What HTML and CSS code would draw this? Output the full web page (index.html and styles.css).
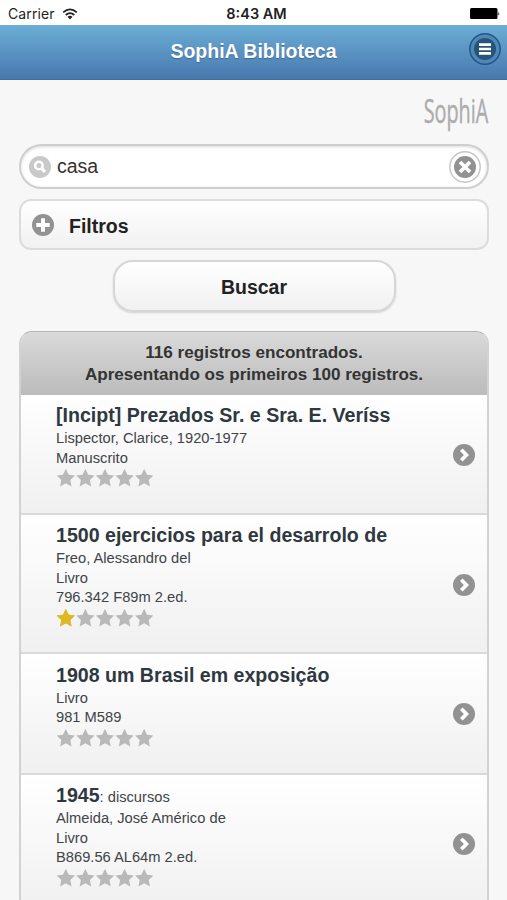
FILE: index.html
```
<!DOCTYPE html>
<html lang="pt-BR">
<head>
    <meta charset="UTF-8">
    <meta name="viewport" content="width=device-width, initial-scale=1.0">
    <title>SophiA Biblioteca</title>
    <link rel="stylesheet" href="styles.css">
</head>
<body>
    <svg class="defs" width="0" height="0">
        <symbol id="arrow" viewBox="0 0 22 22">
            <circle cx="11" cy="11" r="11" fill="#929292"/>
            <path d="M8.3 5.8 L13.4 11 L8.3 16.2" fill="none" stroke="#fff" stroke-width="3.7"/>
        </symbol>
        <symbol id="star" viewBox="0 0 20 20">
            <path d="M10 .8 L12.9 6.9 L19.3 7.7 L14.6 12.2 L15.9 18.8 L10 15.6 L4.1 18.8 L5.4 12.2 L.7 7.7 L7.1 6.9 Z"/>
        </symbol>
        <symbol id="stars" viewBox="0 0 100 20">
            <use href="#star" x="0" width="20" height="20"/>
            <use href="#star" x="20" width="20" height="20"/>
            <use href="#star" x="40" width="20" height="20"/>
            <use href="#star" x="60" width="20" height="20"/>
            <use href="#star" x="80" width="20" height="20"/>
        </symbol>
    </svg>
    <div class="status">
        <div class="carrier">
            <span>Carrier</span>
            <svg width="16" height="12" viewBox="0 0 16 12">
                <path d="M1.2 4.4 Q8 -1.7 14.8 4.4 M3.7 7 Q8 3.2 12.3 7" fill="none" stroke="#222" stroke-width="1.8"/>
                <path d="M5.5 8.8 Q8 6.8 10.5 8.8 L8 11.5 Z" fill="#222"/>
            </svg>
        </div>
        <span class="time">8:43 AM</span>
        <svg class="battery" width="30" height="13" viewBox="0 0 30 13">
            <rect x="0" y="1" width="27.5" height="11" rx="1.5"/>
            <path d="M28.3 4.5 Q30 6.5 28.3 8.5 Z"/>
        </svg>
    </div>
    <header class="header">
        <h1>SophiA Biblioteca</h1>
        <svg class="menu" width="34" height="34" viewBox="0 0 34 34">
            <circle cx="17" cy="17" r="15.2" fill="#4d88b9" stroke="#215682" stroke-width="1.5"/>
            <circle cx="17" cy="17" r="11" fill="#285479"/>
            <path d="M11 12.7 h12 M11 17 h12 M11 21.3 h12" stroke="#fff" stroke-width="2.7"/>
        </svg>
    </header>
    <main class="content">
        <div class="logo"><span>SophiA</span></div>
        <div class="search">
            <svg width="22" height="22" viewBox="0 0 22 22">
                <circle cx="11" cy="11" r="11" fill="#c9c9c9"/>
                <circle cx="9.9" cy="9.5" r="3.8" fill="none" stroke="#fff" stroke-width="2.5"/>
                <path d="M12.5 12.2 L16 16" stroke="#fff" stroke-width="3.2"/>
            </svg>
            <span class="query">casa</span>
            <svg class="clear" width="34" height="34" viewBox="0 0 34 34">
                <circle cx="17" cy="17" r="15.2" fill="#fff" stroke="#c4c4c4" stroke-width="1.4"/>
                <circle cx="17" cy="17" r="11" fill="#929292"/>
                <path d="M12 12 L22 22 M22 12 L12 22" stroke="#fff" stroke-width="3.7"/>
            </svg>
        </div>
        <div class="filters">
            <svg width="22" height="22" viewBox="0 0 22 22">
                <circle cx="11" cy="11" r="11" fill="#929292"/>
                <path d="M11 4.3 V17.7 M4.3 11 H17.7" stroke="#fff" stroke-width="3.9"/>
            </svg>
            <span>Filtros</span>
        </div>
        <button class="submit">Buscar</button>
        <section class="results">
            <div class="summary">116 registros encontrados.<br>Apresentando os primeiros 100 registros.</div>
            <article class="item">
                <div class="info">
                    <h2>[Incipt] Prezados Sr. e Sra. E. Veríss</h2>
                    <p>Lispector, Clarice, 1920-1977</p>
                    <p>Manuscrito</p>
                    <svg class="stars"><use href="#stars"/></svg>
                </div>
                <svg class="arrow"><use href="#arrow"/></svg>
            </article>
            <article class="item">
                <div class="info">
                    <h2>1500 ejercicios para el desarrolo de</h2>
                    <p>Freo, Alessandro del</p>
                    <p>Livro</p>
                    <p>796.342 F89m 2.ed.</p>
                    <svg class="stars" viewBox="0 0 100 20"><use href="#stars"/><use class="on" href="#star" width="20" height="20"/></svg>
                </div>
                <svg class="arrow"><use href="#arrow"/></svg>
            </article>
            <article class="item">
                <div class="info">
                    <h2>1908 um Brasil em exposição</h2>
                    <p>Livro</p>
                    <p>981 M589</p>
                    <svg class="stars"><use href="#stars"/></svg>
                </div>
                <svg class="arrow"><use href="#arrow"/></svg>
            </article>
            <article class="item">
                <div class="info">
                    <h2>1945<small>: discursos</small></h2>
                    <p>Almeida, José Américo de</p>
                    <p>Livro</p>
                    <p>B869.56 AL64m 2.ed.</p>
                    <svg class="stars"><use href="#stars"/></svg>
                </div>
                <svg class="arrow"><use href="#arrow"/></svg>
            </article>
        </section>
    </main>
</body>
</html>
```
FILE: styles.css
```
*{
    margin: 0;
    padding: 0;
    box-sizing: border-box;
}
body{
    height: 900px;
    overflow: hidden;
    background: #f7f7f7;
    font-family: "Liberation Sans", Arial, sans-serif;
    color: #222;
}
svg{
    display: block;
    flex: none;
}
.defs{
    position: absolute;
}
.status{
    display: grid;
    grid-template-columns: 1fr auto 1fr;
    align-items: center;
    height: 25px;
    padding: 2px 7px 0 8px;
    background: #fff;
    font-family: Inter, sans-serif;
    font-size: 14px;
}
.carrier{
    display: flex;
    align-items: center;
    gap: 7px;
}
.carrier span{
    letter-spacing: .1px;
}
.time{
    padding-left: 5px;
    font-weight: 600;
    font-size: 14.5px;
}
.battery{
    justify-self: end;
}
.header{
    display: grid;
    grid-template-columns: 34px 1fr 34px;
    align-items: center;
    height: 55px;
    padding: 0 5px 6px;
    background: linear-gradient(#6baed6, #4878ae);
    border-bottom: 1px solid #416e9f;
}
.header h1{
    grid-column: 2;
    padding-top: 4px;
    text-align: center;
    font-size: 19.5px;
    color: #fff;
    text-shadow: 0 1px 1px #3e6790;
}
.content{
    padding: 11px 18px 0 19px;
}
.logo{
    display: flex;
    justify-content: flex-end;
    height: 53px;
}
.logo span{
    font-family: "Open Sans", sans-serif;
    font-size: 32px;
    line-height: 39px;
    color: #acacac;
    -webkit-text-stroke: .4px #acacac;
    transform: translateX(-1px) scaleX(.62);
    transform-origin: right;
}
.search{
    display: flex;
    align-items: center;
    height: 45px;
    padding: 0 5px 0 8px;
    background: #fff;
    border: 2px solid #cecece;
    border-radius: 23px;
    box-shadow: inset 0 1px 3px rgba(0,0,0,0.15);
}
.query{
    flex: 1;
    padding-left: 6px;
    font-size: 19.5px;
    color: #333;
}
.filters{
    display: flex;
    align-items: center;
    gap: 15px;
    height: 51px;
    margin-top: 10px;
    padding: 0 11px;
    border: 2px solid #dcdcdc;
    border-radius: 12px;
    background: linear-gradient(#fff, #f1f1f1);
    font-size: 19.5px;
    font-weight: bold;
}
.filters span{
    padding-top: 3px;
}
.submit{
    display: block;
    width: 283px;
    height: 52px;
    margin: 10px auto 0;
    padding-top: 3px;
    border: 2px solid #d6d6d6;
    border-radius: 20px;
    background: linear-gradient(#fff, #f1f1f1);
    box-shadow: 0 1px 2px rgba(0,0,0,0.15);
    font: bold 19.5px "Liberation Sans", Arial, sans-serif;
    color: #222;
}
.results{
    margin-top: 19px;
    border: 2px solid #d2d2d2;
    border-top: 1px solid #b3b3b3;
    border-radius: 13px 13px 0 0;
    overflow: hidden;
}
.summary{
    height: 62.6px;
    padding-top: 10px;
    background: linear-gradient(#dadada, #bbb);
    text-align: center;
    font-size: 17.1px;
    font-weight: bold;
    line-height: 22px;
    color: #333;
}
.item{
    display: flex;
    align-items: center;
    justify-content: space-between;
    padding: 8.7px 12px 24.8px 35px;
    background: linear-gradient(#fff, #f0f0f0);
    border-bottom: 2px solid #dadada;
}
.item h2{
    height: 25.6px;
    font-size: 19.6px;
    line-height: 25px;
    white-space: nowrap;
    color: #2f3840;
}
.item p,
.item small{
    font-size: 14.7px;
    font-weight: normal;
    line-height: 19.7px;
    color: #404448;
}
.stars{
    width: 98px;
    height: 19.6px;
    fill: #b9b9b9;
}
.on{
    fill: #e0b91c;
}
.arrow{
    width: 22px;
    height: 22px;
    margin-top: 18px;
}
```
